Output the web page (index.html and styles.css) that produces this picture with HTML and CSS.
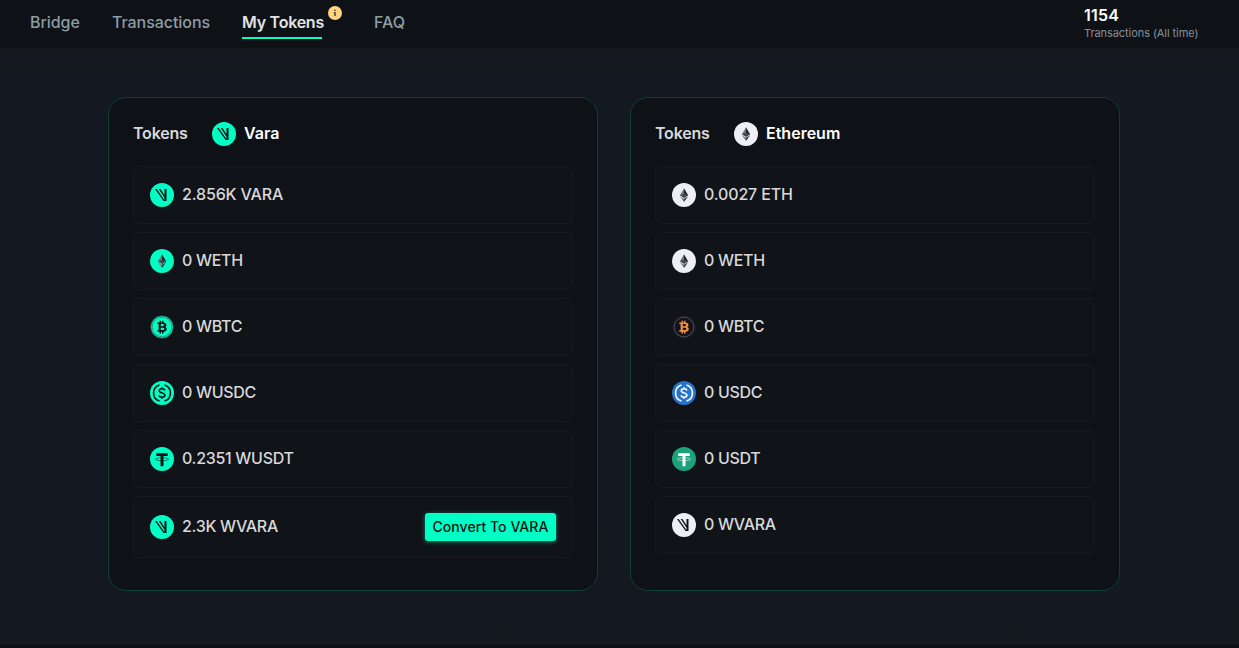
FILE: index.html
```html
<!DOCTYPE html>
<html lang="en">
<head>
<meta charset="utf-8">
<title>My Tokens</title>
<link rel="stylesheet" href="styles.css">
</head>
<body>
<svg class="sprite" aria-hidden="true">
  <symbol id="vara" viewBox="0 0 24 24"><circle cx="12" cy="12" r="12"/><path class="ink" d="M5 6h1.6l7.9 11V6h2v12h-2.9zM8.7 6h1.7l4.3 6.4v2.7z"/></symbol>
  <symbol id="eth" viewBox="0 0 24 24"><circle cx="12" cy="12" r="12"/><path fill="#777b7d" d="M12 5.2v9.5l-4.1-2.5z"/><path fill="#202326" d="M12 5.2v9.5l4.1-2.5z"/><path fill="#44484a" d="M7.9 12.2 12 10.4l4.1 1.8-4.1 2.5z"/><path fill="#777b7d" d="M7.9 13.2 12 15.7v3.2z"/><path fill="#303436" d="M16.1 13.2 12 15.7v3.2z"/></symbol>
  <symbol id="btc" viewBox="0 0 24 24"><circle class="rim" cx="12" cy="12" r="11.1"/><circle class="ring" cx="12" cy="12" r="9.8"/><path class="ink" fill-rule="evenodd" d="M7.3 7.4h2.2V5.7h1.5v1.7h1V5.7h1.5v1.8c1.8.2 2.9 1.1 2.9 2.4 0 1-.5 1.7-1.4 2 1.2.3 1.8 1.2 1.8 2.2 0 1.7-1.2 2.6-3.3 2.7v1.6H12v-1.6h-1v1.6H9.5v-1.6H7.3v-1.6h1.3V9H7.3zm3.5 1.6v2.3h1.7c1 0 1.5-.5 1.5-1.2S13.5 9 12.5 9zm0 3.8v2.3h1.8c1 0 1.7-.4 1.7-1.2s-.7-1.1-1.7-1.1z"/></symbol>
  <symbol id="usdc" viewBox="0 0 24 24"><circle cx="12" cy="12" r="12"/><g class="line"><path d="M9.5 3.9a8.5 8.5 0 0 0 0 16.2M14.5 3.9a8.5 8.5 0 0 1 0 16.2"/><path d="M14.8 9.5c-.2-1-1.2-1.7-2.8-1.7s-2.7.7-2.7 2c0 2.9 5.6 1.4 5.6 4.3 0 1.3-1.2 2.1-2.9 2.1s-2.8-.7-3-1.8M12 6.2v1.6M12 16.2v1.6"/></g></symbol>
  <symbol id="usdt" viewBox="0 0 24 24"><circle cx="12" cy="12" r="12"/><path class="ink" d="M6.3 6.2h11.4v2.8h-4.2v10.2h-3V9H6.3z"/><ellipse class="thin" cx="12" cy="12.2" rx="6.8" ry="1.4"/></symbol>
</svg>
<header class="topbar">
  <nav class="nav">
    <a class="link bridge">Bridge</a>
    <a class="link transactions">Transactions</a>
    <a class="link active">My Tokens<svg class="badge" viewBox="0 0 14 14"><circle cx="7" cy="7" r="7"/><path d="M6.1 3.8h1.7v1.3H6.1zM5.7 6h2.1v4H6.2V7h-.5z"/></svg></a>
    <a class="link faq">FAQ</a>
  </nav>
  <div class="stats"><strong>1154</strong><span>Transactions (All time)</span></div>
</header>
<main class="cards">
  <section class="card">
    <h2 class="heading"><span class="label">Tokens</span><svg class="icon mint"><use href="#vara"/></svg><span class="network">Vara</span></h2>
    <ul class="list">
      <li class="row"><svg class="icon mint"><use href="#vara"/></svg><span class="wide">2.856K VARA</span></li>
      <li class="row"><svg class="icon mint"><use href="#eth"/></svg><span>0 WETH</span></li>
      <li class="row"><svg class="icon mint"><use href="#btc"/></svg><span>0 WBTC</span></li>
      <li class="row"><svg class="icon mint"><use href="#usdc"/></svg><span>0 WUSDC</span></li>
      <li class="row"><svg class="icon mint"><use href="#usdt"/></svg><span>0.2351 WUSDT</span></li>
      <li class="row tall"><svg class="icon mint"><use href="#vara"/></svg><span>2.3K WVARA</span><button class="convert">Convert To VARA</button></li>
    </ul>
  </section>
  <section class="card">
    <h2 class="heading"><span class="label">Tokens</span><svg class="icon white"><use href="#eth"/></svg><span class="network">Ethereum</span></h2>
    <ul class="list">
      <li class="row"><svg class="icon white"><use href="#eth"/></svg><span class="wide">0.0027 ETH</span></li>
      <li class="row"><svg class="icon white"><use href="#eth"/></svg><span>0 WETH</span></li>
      <li class="row"><svg class="icon orange"><use href="#btc"/></svg><span>0 WBTC</span></li>
      <li class="row"><svg class="icon blue"><use href="#usdc"/></svg><span>0 USDC</span></li>
      <li class="row"><svg class="icon green"><use href="#usdt"/></svg><span>0 USDT</span></li>
      <li class="row"><svg class="icon white"><use href="#vara"/></svg><span>0 WVARA</span></li>
    </ul>
  </section>
</main>
</body>
</html>
```
FILE: styles.css
```css
* { box-sizing: border-box; }
body {
  margin: 0;
  height: 648px;
  overflow: hidden;
  display: flex;
  flex-direction: column;
  background: linear-gradient(#14191d, #14191d 50px, #141820 70px, #141920);
  border-bottom: 3px solid #0f0f18;
  color: #d8d9da;
  font: 500 16px/24px Inter, "Liberation Sans", sans-serif;
}
.sprite { position: absolute; width: 0; height: 0; }
.topbar {
  height: 48px;
  flex: none;
  display: flex;
  justify-content: space-between;
  padding: 0 41px 0 30px;
  background: #0e1116;
}
.nav { display: flex; gap: 32px; padding-top: 9px; }
.link { height: 30px; line-height: 27px; color: #8c9da3; white-space: nowrap; }
.bridge { width: 50px; letter-spacing: -.05px; }
.transactions { width: 98px; letter-spacing: -.05px; }
.active {
  position: relative;
  width: 80px;
  margin-right: 20px;
  color: #e2e3e5;
  font-weight: 600;
  letter-spacing: -.25px;
  border-bottom: 2px solid #00ffc4;
}
.badge { position: absolute; left: 86px; top: -3px; width: 14px; height: 14px; fill: #ffd580; }
.badge path { fill: #55492f; }
.stats { width: 114px; padding-top: 5px; display: flex; flex-direction: column; white-space: nowrap; }
.stats strong { color: #fff; font-size: 16px; line-height: 21px; font-weight: 600; letter-spacing: .25px; }
.stats span { color: #839197; font-size: 11px; line-height: 14px; font-weight: 400; letter-spacing: -.07px; }
.cards { display: flex; align-items: flex-start; gap: 32px; padding: 49px 0 0 108px; }
.card {
  width: 490px;
  height: 494px;
  padding: 24px;
  border: 1px solid #0c3f35;
  border-radius: 18px;
  background: #0e1116;
}
.heading { display: flex; align-items: center; height: 24px; margin: 0 0 20px; font-size: 16px; line-height: 24px; font-weight: 600; }
.heading span { padding-bottom: 2px; }
.label { width: 79px; letter-spacing: -.2px; }
.network { color: #fff; margin-left: 8px; letter-spacing: 0; }
.list { list-style: none; display: flex; flex-direction: column; gap: 8px; margin: 0; padding: 0; }
.row {
  display: flex;
  align-items: center;
  gap: 8px;
  height: 58px;
  padding: 0 16px;
  border: 1px solid #171a1f;
  border-radius: 6px;
  background: #101318;
  white-space: nowrap;
}
.row span { line-height: 24px; padding-bottom: 2px; letter-spacing: -.3px; }
.row .wide { letter-spacing: -.15px; }
.tall { height: 62px; }
.icon { flex: none; width: 24px; height: 24px; --ink: #0e1116; }
.mint { fill: #00ffc4; --ring: #387b72; --rim: #30776d; }
.white { fill: #edeff5; }
.blue { fill: #2775ca; --ink: #fff; }
.green { fill: #1ba27a; --ink: #fff; }
.orange { fill: #14151c; --ink: #f09242; --ring: #5b5965; --rim: #282331; }
.ink { fill: var(--ink); }
.line { fill: none; stroke: var(--ink); stroke-width: 1.6; }
.thin { fill: none; stroke: var(--ink); stroke-width: .5; }
.rim { stroke: var(--rim); stroke-width: .8; }
.ring { fill: none; stroke: var(--ring); stroke-width: .8; }
.convert {
  width: 131px;
  height: 28px;
  margin-left: auto;
  padding: 0;
  border: 0;
  border-radius: 3px;
  background: #00ffc4;
  box-shadow: 0 1px 4px #00ffc480;
  color: #0e1116;
  font: 500 14px/28px Inter, sans-serif;
  letter-spacing: .05px;
  white-space: nowrap;
}
```
